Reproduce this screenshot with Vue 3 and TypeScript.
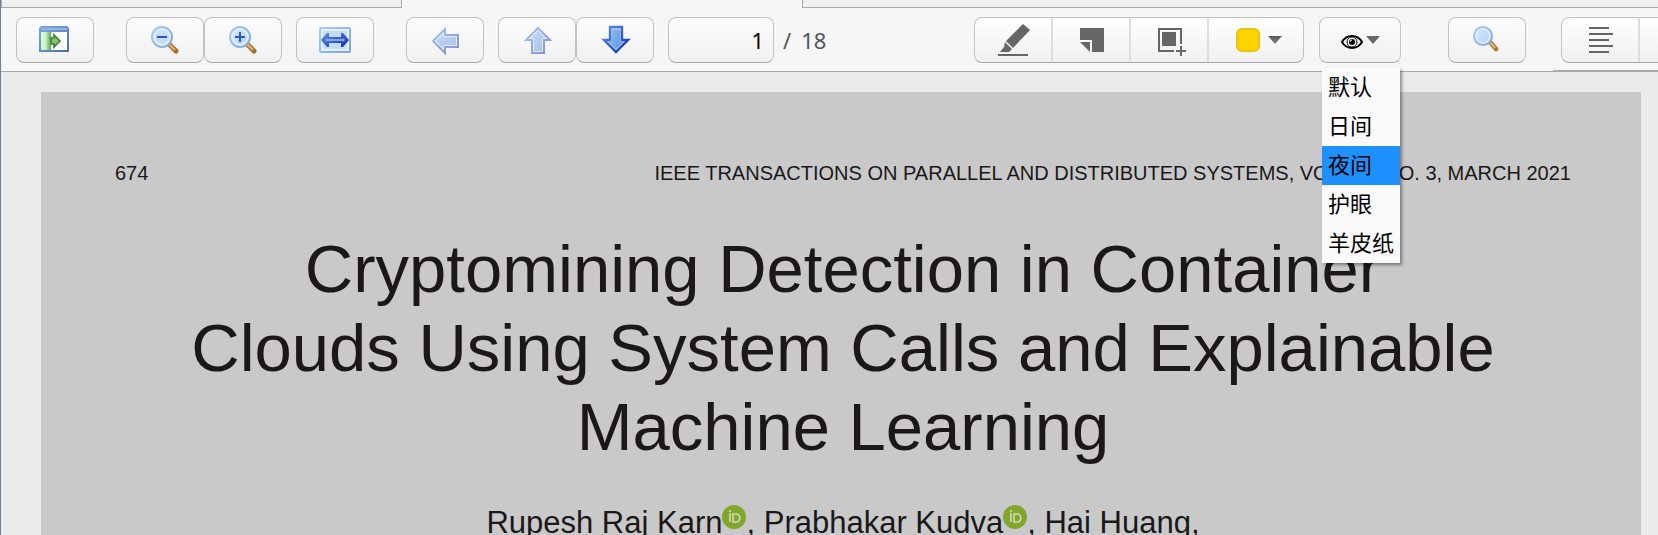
<script setup lang="ts">
import { ref } from 'vue'

const page = ref('1')
const total = 18
const themes = ['默认', '日间', '夜间', '护眼', '羊皮纸']
const current = ref('夜间')
</script>

<template>
  <div class="reader">
    <div class="tabs">
      <div class="tab"></div>
      <div class="tab active"></div>
      <div class="tab rest"></div>
    </div>

    <header class="toolbar">
      <svg class="defs" aria-hidden="true">
        <defs>
          <linearGradient id="lens" x1="0" y1="0" x2="1" y2="1">
            <stop offset="0" stop-color="#cfe3fa" />
            <stop offset="1" stop-color="#b9d6f6" />
          </linearGradient>
          <linearGradient id="rim" x1="0" y1="0" x2="1" y2="1">
            <stop offset="0" stop-color="#a9cdf1" />
            <stop offset="1" stop-color="#7ba6df" />
          </linearGradient>
          <linearGradient id="frame" x1="0" y1="0" x2="1" y2="1">
            <stop offset="0" stop-color="#7fa8de" />
            <stop offset="1" stop-color="#4c6eab" />
          </linearGradient>
          <linearGradient id="pane">
            <stop offset="0" stop-color="#dcfbd6" />
            <stop offset="0.45" stop-color="#cdf3c5" />
            <stop offset="1" stop-color="#5aa850" />
          </linearGradient>
          <linearGradient id="deep" x1="0" y1="0" x2="1" y2="1">
            <stop offset="0" stop-color="#5b93e2" />
            <stop offset="1" stop-color="#0c2fb0" />
          </linearGradient>
          <linearGradient id="fill" x1="0" y1="0" x2="1" y2="1">
            <stop offset="0" stop-color="#8fb9ee" />
            <stop offset="1" stop-color="#5f97dd" />
          </linearGradient>
          <linearGradient id="caret" x1="0" y1="0" x2="0" y2="1">
            <stop offset="0" stop-color="#555" />
            <stop offset="1" stop-color="#858585" />
          </linearGradient>
        </defs>
      </svg>

      <button class="btn" aria-label="Toggle sidebar">
        <svg class="icon" viewBox="0 0 32 32">
          <path d="M2 2H28L30 4V28H0V4Z" fill="url(#frame)" />
          <rect x="2" y="4" width="26" height="2" fill="#8fb5ea" />
          <rect x="2" y="8" width="26" height="18" fill="#fff" />
          <rect x="2" y="8" width="10" height="18" fill="url(#pane)" />
          <path d="M12 14H15V11L21 17L15 23V20H12Z" fill="#83c476" stroke="#397f37" stroke-width="1.6" />
        </svg>
      </button>

      <div class="pair zoom">
        <button class="btn" aria-label="Zoom out">
          <svg class="icon" viewBox="0 0 32 32">
            <path d="M20 20L27 27" stroke="#a86c26" stroke-width="5" stroke-linecap="round" />
            <path d="M19 19L26 26" stroke="#dcb07c" stroke-width="2.4" />
            <circle cx="13" cy="13" r="10" fill="#e3effc" stroke="url(#rim)" stroke-width="2" />
            <circle cx="13" cy="13" r="7" fill="url(#lens)" />
            <rect x="8" y="12" width="10" height="2" fill="#2858b8" />
          </svg>
        </button>
        <button class="btn" aria-label="Zoom in">
          <svg class="icon" viewBox="0 0 32 32">
            <path d="M20 20L27 27" stroke="#a86c26" stroke-width="5" stroke-linecap="round" />
            <path d="M19 19L26 26" stroke="#dcb07c" stroke-width="2.4" />
            <circle cx="13" cy="13" r="10" fill="#e3effc" stroke="url(#rim)" stroke-width="2" />
            <circle cx="13" cy="13" r="7" fill="url(#lens)" />
            <path d="M8 12H12V8H14V12H18V14H14V18H12V14H8Z" fill="#2858c4" />
          </svg>
        </button>
      </div>

      <button class="btn fit" aria-label="Fit width">
        <svg class="icon" viewBox="0 0 32 32">
          <rect x="1" y="4" width="30" height="24" rx="1" fill="#e3effb" stroke="url(#rim)" stroke-width="2" />
          <rect x="4" y="7" width="24" height="18" fill="#c6dcf5" />
          <path d="M2 16L8 9H10V13H22V9H24L30 16L24 23H22V19H10V23H8Z" fill="url(#deep)" />
          <path d="M6 16L8 14V15H24V14L26 16L24 18V17H8V18Z" fill="#86a6e4" />
        </svg>
      </button>

      <button class="btn back" aria-label="Back" disabled>
        <svg class="icon faded" viewBox="0 0 32 32">
          <path d="M4 17L16 5V11H29V23H16V29Z" fill="#cfe1fb" stroke="url(#deep)" stroke-width="2" />
          <path d="M7 17L14 10V13H27V21H14V24Z" fill="url(#fill)" />
        </svg>
      </button>

      <div class="pair pages">
        <button class="btn" aria-label="Previous page" disabled>
          <svg class="icon faded" viewBox="0 0 32 32">
            <path d="M17 4L29 16H23V29H11V16H5Z" fill="#cfe1fb" stroke="url(#deep)" stroke-width="2" />
            <path d="M17 7L24 14H21V27H13V14H10Z" fill="url(#fill)" />
          </svg>
        </button>
        <button class="btn" aria-label="Next page">
          <svg class="icon" viewBox="0 0 32 32">
            <path d="M17 28L29 16H23V3H11V16H5Z" fill="#a9c9f4" stroke="url(#deep)" stroke-width="2.4" />
            <path d="M17 25L24 18H21V6H13V18H10Z" fill="url(#fill)" />
          </svg>
        </button>
      </div>

      <input v-model="page" class="page-input" type="text" aria-label="Page number" />
      <span class="total"><span>/</span><span>{{ total }}</span></span>

      <div class="spacer"></div>

      <div class="group">
        <button class="cell" aria-label="Highlight">
          <svg class="icon" viewBox="0 0 32 32" fill="#666">
            <path d="M26 0L33 6L16 24L9 17Z" />
            <path d="M8 18L15 25L12 28H3L7 23Z" />
            <rect x="1" y="30" width="30" height="2" />
          </svg>
        </button>
        <button class="cell" aria-label="Note">
          <svg class="icon" viewBox="0 0 32 32" fill="#666">
            <path d="M5 4H29V28H17V16H5Z" />
            <path d="M5 18H15V28Z" />
          </svg>
        </button>
        <button class="cell" aria-label="Select area">
          <svg class="icon" viewBox="0 0 32 32" fill="#666">
            <path d="M5 4H29V20H27V6H7V26H21V28H5Z" />
            <rect x="9" y="8" width="14" height="14" />
            <path d="M27 22H29V26H33V28H29V32H27V28H23V26H27Z" />
          </svg>
        </button>
        <button class="cell color" aria-label="Colour">
          <span class="swatch"></span>
          <svg class="caret" viewBox="0 0 14 8"><path d="M0 0H14L7 8Z" fill="url(#caret)" /></svg>
        </button>
      </div>

      <div class="theme">
        <button class="btn eye-btn" aria-label="Theme" aria-haspopup="listbox">
          <svg class="eye" viewBox="0 0 22 18">
            <path d="M1 11C4 6 8 5 11 5S18 6 21 11C18 16 14 17 11 17S4 16 1 11Z" fill="#fff" stroke="#000" stroke-width="2" />
            <circle cx="11" cy="11" r="5" fill="#fff" stroke="#000" stroke-width="1" />
            <circle cx="11" cy="11" r="3" />
            <path d="M9 11A2 2 0 0 1 11 9" fill="none" stroke="#fff" stroke-width="1" />
          </svg>
          <svg class="caret" viewBox="0 0 14 8"><path d="M0 0H14L7 8Z" fill="#666" /></svg>
        </button>
        <div class="menu" role="listbox" aria-label="Theme">
          <button
            v-for="name in themes"
            :key="name"
            role="option"
            :aria-selected="name === current"
            class="option"
            :class="{ selected: name === current }"
            @click="current = name"
          >{{ name }}</button>
        </div>
      </div>

      <button class="btn find" aria-label="Find">
        <svg class="icon" viewBox="0 0 32 32">
          <path d="M19 18L25 25" stroke="#b0752c" stroke-width="4.6" stroke-linecap="round" />
          <path d="M19 18L24 24" stroke="#deb683" stroke-width="2" />
          <circle cx="12" cy="12" r="9" fill="#dcebfc" stroke="url(#rim)" stroke-width="2" />
          <circle cx="12" cy="12" r="6" fill="url(#lens)" />
        </svg>
      </button>

      <div class="extras">
        <div class="group open">
          <button class="cell" aria-label="Align text">
            <svg class="icon" viewBox="0 0 32 32" fill="#666">
              <rect x="5" y="3" width="20" height="2" />
              <rect x="5" y="9" width="24" height="2" />
              <rect x="5" y="15" width="20" height="2" />
              <rect x="5" y="21" width="24" height="2" />
              <rect x="5" y="27" width="20" height="2" />
            </svg>
          </button>
          <span class="more"></span>
        </div>
      </div>
    </header>

    <main class="viewer">
      <article class="paper">
        <div class="running-head">
          <span>674</span>
          <span>IEEE TRANSACTIONS ON PARALLEL AND DISTRIBUTED SYSTEMS, VOL. 32, NO. 3, MARCH 2021</span>
        </div>
        <h1>
          Cryptomining Detection in Container<br />
          Clouds Using System Calls and Explainable<br />
          Machine Learning
        </h1>
        <p class="authors">
          <span>Rupesh Raj Karn</span><a class="orcid" href="#" aria-label="ORCID"><svg viewBox="0 0 24 24">
            <circle cx="12" cy="12" r="12" fill="#82a62c" />
            <path d="M8 8V17M11 9V17H14C19 17 19 9 14 9Z" fill="none" stroke="#d5dcc0" stroke-width="1.5" />
            <circle cx="8" cy="6" r="1" fill="#d5dcc0" />
          </svg></a><span>, Prabhakar Kudva</span><a class="orcid" href="#" aria-label="ORCID"><svg viewBox="0 0 24 24">
            <circle cx="12" cy="12" r="12" fill="#82a62c" />
            <path d="M8 8V17M11 9V17H14C19 17 19 9 14 9Z" fill="none" stroke="#d5dcc0" stroke-width="1.5" />
            <circle cx="8" cy="6" r="1" fill="#d5dcc0" />
          </svg></a><span>, Hai Huang,</span>
        </p>
      </article>
    </main>
  </div>
</template>

<style>
body {
  margin: 0;
  overflow: hidden;
}
</style>

<style scoped>
.reader {
  box-sizing: border-box;
  display: flex;
  flex-direction: column;
  height: 100vh;
  overflow: hidden;
  border-left: 1px solid #708090;
  background: #ebebeb;
  font-family: "Liberation Sans", Arial, sans-serif;
}
.tabs {
  display: flex;
  flex: none;
  height: 8px;
  background: #f6f6f6;
}
.tab {
  box-sizing: border-box;
  width: 401px;
  border: 1px solid #a9a9a9;
  border-top: 0;
  background: #f0f0f0;
}
.tab.active {
  width: 400px;
  border: 0;
  background: #f6f6f6;
}
.tab.rest {
  flex: 1;
  border-right: 0;
}
.toolbar {
  display: flex;
  flex: none;
  align-items: center;
  height: 63px;
  padding-left: 15px;
  border-bottom: 1px solid #a9a9a9;
  background: #f6f6f6;
}
.toolbar > * {
  flex: none;
}
.defs {
  position: absolute;
  width: 0;
  height: 0;
}
.btn,
.page-input,
.group {
  box-sizing: border-box;
  height: 46px;
  border: 1px solid #c3c3c3;
  border-bottom-color: #a9a9a9;
  border-radius: 8px;
  background: linear-gradient(#fcfcfc, #f1f1f1);
}
.btn {
  display: flex;
  align-items: center;
  justify-content: center;
  width: 78px;
  padding: 0;
}
.icon {
  display: block;
  flex: none;
  width: 32px;
  height: 32px;
  overflow: visible;
}
.faded {
  opacity: 0.5;
}
.pair {
  display: flex;
}
.zoom,
.back {
  margin-left: 32px;
}
.fit,
.pages,
.page-input {
  margin-left: 14px;
}
.page-input {
  width: 106px;
  padding: 0 9px;
  text-align: right;
  color: #000;
  outline: none;
}
.page-input,
.total {
  font-family: "Noto Sans", sans-serif;
  font-size: 22px;
  line-height: 30px;
}
.total {
  display: flex;
  gap: 10px;
  margin-left: 9px;
  color: #555;
}
.toolbar > .spacer {
  flex: 1;
}
.group {
  display: flex;
  overflow: hidden;
  background: linear-gradient(#fff, #f0f0f0);
}
.cell {
  box-sizing: border-box;
  display: flex;
  align-items: center;
  justify-content: center;
  width: 78px;
  padding: 0;
  border: 0;
  border-right: 2px solid #ddd;
  background: none;
}
.cell.color {
  gap: 8px;
  width: 94px;
  padding-left: 6px;
  border-right: 0;
}
.swatch {
  box-sizing: border-box;
  width: 24px;
  height: 24px;
  border: 2px solid #edc300;
  border-radius: 6px;
  background: #ffd400;
}
.caret {
  width: 14px;
  height: 8px;
}
.theme {
  position: relative;
  margin-left: 15px;
}
.eye-btn {
  gap: 3px;
  width: 82px;
}
.eye {
  width: 22px;
  height: 18px;
  overflow: visible;
}
.menu {
  position: absolute;
  z-index: 2;
  top: 51px;
  left: 3px;
  display: flex;
  flex-direction: column;
  background: #fafafa;
  box-shadow: 2px 2px 3px rgba(0, 0, 0, 0.4);
}
.option {
  height: 39px;
  padding: 0 6px 4px;
  border: 0;
  background: none;
  color: #000;
  font-family: "Noto Sans CJK SC", sans-serif;
  font-size: 22px;
  line-height: 35px;
  text-align: left;
  white-space: nowrap;
}
.option.selected {
  background: #1e90ff;
}
.find {
  margin-left: 47px;
}
.extras {
  box-sizing: border-box;
  display: flex;
  align-items: center;
  align-self: stretch;
  margin-left: 27px;
  padding-left: 8px;
  box-shadow: inset 0 -1px #a9a9a9;
}
.group.open {
  border-right: 0;
  border-radius: 8px 0 0 8px;
}
.more {
  width: 18px;
}
.viewer {
  flex: 1;
  min-height: 0;
  padding: 20px 17px 0 40px;
}
.paper {
  box-sizing: border-box;
  height: 100%;
  padding: 70px 70px 0 74px;
  overflow: hidden;
  background: #c9c9c9;
  color: #1a1819;
}
.running-head {
  display: flex;
  justify-content: space-between;
  font-size: 20px;
  line-height: 23px;
  white-space: nowrap;
}
h1 {
  margin: 44px 0 0;
  font-size: 67px;
  font-weight: 400;
  line-height: 79px;
  text-align: center;
  white-space: nowrap;
}
.authors {
  display: flex;
  justify-content: center;
  margin: 39px 0 0;
  font-size: 31px;
  line-height: 36px;
  white-space: pre;
}
.orcid {
  width: 24px;
  height: 24px;
}
.orcid svg {
  display: block;
}
</style>
